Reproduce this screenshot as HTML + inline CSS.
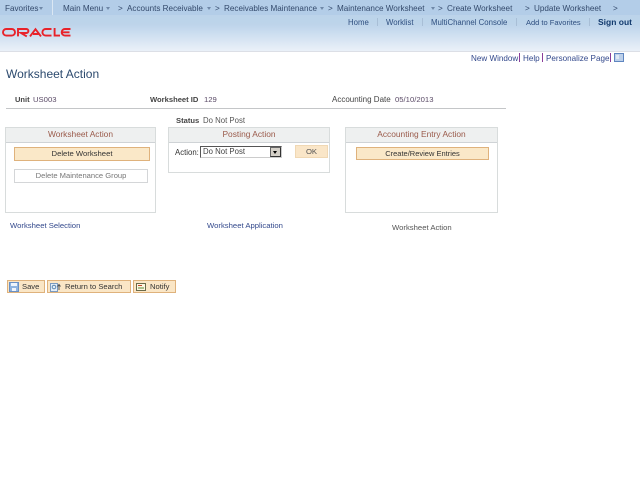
<!DOCTYPE html>
<html>
<head>
<meta charset="utf-8">
<style>
html,body{margin:0;padding:0;background:#fff;}
body{width:640px;height:480px;overflow:hidden;position:relative;font-family:"Liberation Sans",sans-serif;font-size:7.7px;color:#444;filter:blur(.3px);}
.a{position:absolute;white-space:nowrap;line-height:11px;}
.hdr{position:absolute;left:0;top:0;width:640px;height:51px;background:linear-gradient(#b9d2ea 0,#bdd4ea 24px,#c6daee 30px,#dbe7f4 42px,#e9f0f8 50px);border-bottom:1px solid #dcdfe6;}
.nav{position:absolute;left:0;top:0;width:640px;height:15px;background:#b3cde8;}
.n{color:#33496b;font-size:8.15px;top:3px;}
.t{color:#2f4f80;font-size:7.8px;top:17px;}
.sep{position:absolute;width:1px;background:#a8bed6;}
.l{color:#33498c;}
.box{position:absolute;border:1px solid #d8dcdc;box-sizing:border-box;background:#fff;}
.bh{position:absolute;left:0;top:0;right:0;height:14px;background:#eef0f0;border-bottom:1px solid #cfd3d6;text-align:center;color:#9a5a4a;font-size:8.4px;line-height:13px;}
.btn{position:absolute;box-sizing:border-box;background:#fae8c8;border:1px solid #dfb27c;text-align:center;color:#333;font-size:7.7px;line-height:11px;}
.dis{position:absolute;box-sizing:border-box;background:#fff;border:1px solid #d4d6d8;text-align:center;color:#777;font-size:7.6px;line-height:11px;}
.tb{position:absolute;box-sizing:border-box;top:280px;height:13px;background:#fae6c6;border:1px solid #dfb27c;color:#333;font-size:7.6px;line-height:11px;}
.arr{position:absolute;top:7px;width:0;height:0;border-left:2.5px solid transparent;border-right:2.5px solid transparent;border-top:3px solid #6f88a8;}
b{font-weight:bold;}
</style>
</head>
<body>
<div class="hdr"></div>
<div class="nav"></div>
<div class="sep" style="left:52px;top:0;height:15px;background:#dbe7f3;"></div>

<div class="a n" style="left:5px;">Favorites</div><div class="arr" style="left:39px;"></div>
<div class="a n" style="left:63px;">Main Menu</div><div class="arr" style="left:106px;"></div>
<div class="a n" style="left:118px;">&gt;</div>
<div class="a n" style="left:127px;">Accounts Receivable</div><div class="arr" style="left:207px;"></div>
<div class="a n" style="left:215px;">&gt;</div>
<div class="a n" style="left:224px;">Receivables Maintenance</div><div class="arr" style="left:320px;"></div>
<div class="a n" style="left:328px;">&gt;</div>
<div class="a n" style="left:337px;">Maintenance Worksheet</div><div class="arr" style="left:431px;"></div>
<div class="a n" style="left:438px;">&gt;</div>
<div class="a n" style="left:447px;">Create Worksheet</div>
<div class="a n" style="left:525px;">&gt;</div>
<div class="a n" style="left:534px;">Update Worksheet</div>
<div class="a n" style="left:613px;">&gt;</div>

<div class="a t" style="left:348px;">Home</div>
<div class="sep" style="left:377px;top:18px;height:8px;"></div>
<div class="a t" style="left:386px;">Worklist</div>
<div class="sep" style="left:422px;top:18px;height:8px;"></div>
<div class="a t" style="left:431px;">MultiChannel Console</div>
<div class="sep" style="left:516px;top:18px;height:8px;"></div>
<div class="a t" style="left:526px;font-size:7.5px;">Add to Favorites</div>
<div class="sep" style="left:589px;top:18px;height:8px;"></div>
<div class="a t" style="left:598px;color:#123a6e;font-size:8.5px;"><b>Sign out</b></div>

<svg style="position:absolute;left:1px;top:27px;" width="71" height="11" viewBox="0 0 71 11">
<g fill="none" stroke="#e8232a" stroke-width="1.9">
<rect x="2" y="2" width="12" height="6.6" rx="3.3"/>
<path d="M17 9.4V2H25.4a1.9 1.9 0 0 1 0 4H20L25.8 9.4"/>
<path d="M29 9.4L34.5 2.2L40 9.4M32 7H37.5"/>
<path d="M50.5 2H44.7a3.3 3.3 0 0 0 0 6.6H50.5"/>
<path d="M53.6 1V8.6H59"/>
<path d="M69.5 2H64a3.3 3.3 0 0 0 0 6.6H69.5M61.5 5.3H68.5"/>
</g>
</svg>

<div class="a l" style="left:471px;top:53px;font-size:8.1px;">New Window</div>
<div style="position:absolute;left:519px;top:53px;width:1px;height:9px;background:#8a3d9a;"></div>
<div class="a l" style="left:523px;top:53px;font-size:8.1px;">Help</div>
<div style="position:absolute;left:542px;top:53px;width:1px;height:9px;background:#8a3d9a;"></div>
<div class="a l" style="left:546px;top:53px;font-size:8.1px;">Personalize Page</div>
<div style="position:absolute;left:610px;top:53px;width:1px;height:9px;background:#8a3d9a;"></div>
<svg style="position:absolute;left:614px;top:53px;" width="10" height="9"><rect x=".5" y=".5" width="9" height="8" fill="#bcd0ea" stroke="#5f86c0"/><path d="M2 3H5M2 5H5" stroke="#fff"/></svg>

<div class="a" style="left:6px;top:67px;font-size:12px;line-height:14px;color:#2c4a6e;">Worksheet Action</div>

<div class="a" style="left:15px;top:94px;color:#444;"><b style="font-size:7.5px;">Unit</b></div>
<div class="a" style="left:33px;top:94px;color:#5a4a66;">US003</div>
<div class="a" style="left:150px;top:94px;color:#444;"><b style="font-size:7.6px;">Worksheet ID</b></div>
<div class="a" style="left:204px;top:94px;color:#5a4a66;">129</div>
<div class="a" style="left:332px;top:94px;color:#444;font-size:8px;">Accounting Date</div>
<div class="a" style="left:395px;top:94px;color:#5a4a66;">05/10/2013</div>
<div style="position:absolute;left:6px;top:108px;width:500px;height:1px;background:#c4c6c8;"></div>

<div class="a" style="left:176px;top:115px;"><b style="font-size:7.6px;">Status</b></div>
<div class="a" style="left:203px;top:115px;color:#555;font-size:7.8px;">Do Not Post</div>

<div class="box" style="left:5px;top:127px;width:151px;height:86px;">
  <div class="bh">Worksheet Action</div>
</div>
<div class="btn" style="left:14px;top:147px;width:136px;height:14px;">Delete Worksheet</div>
<div class="dis" style="left:14px;top:169px;width:134px;height:14px;">Delete Maintenance Group</div>

<div class="box" style="left:168px;top:127px;width:162px;height:46px;">
  <div class="bh">Posting Action</div>
</div>
<div class="a" style="left:175px;top:147px;color:#333;font-size:7.8px;">Action:</div>
<div style="position:absolute;box-sizing:border-box;left:200px;top:146px;width:82px;height:12px;border:1px solid #555;border-right-color:#ccc;border-bottom-color:#ccc;background:#fff;color:#444;padding-left:2px;line-height:10px;font-size:7.8px;">Do Not Post
  <div style="position:absolute;right:0;top:0;width:11px;height:10px;background:#d4d0c8;border:1px solid #666;border-right-color:#333;border-bottom-color:#333;box-sizing:border-box;"><div style="position:absolute;left:2px;top:3px;width:0;height:0;border-left:2.5px solid transparent;border-right:2.5px solid transparent;border-top:3px solid #000;"></div></div>
</div>
<div class="btn" style="left:295px;top:145px;width:33px;height:13px;background:#fae6c8;border-color:#f0d8b4;color:#555;">OK</div>

<div class="box" style="left:345px;top:127px;width:153px;height:86px;">
  <div class="bh">Accounting Entry Action</div>
</div>
<div class="btn" style="left:356px;top:147px;width:133px;height:13px;font-size:7.5px;">Create/Review Entries</div>

<div class="a l" style="left:10px;top:220px;">Worksheet Selection</div>
<div class="a l" style="left:207px;top:220px;">Worksheet Application</div>
<div class="a" style="left:392px;top:222px;color:#555;">Worksheet Action</div>

<div class="tb" style="left:7px;width:38px;">
  <svg style="position:absolute;left:1px;top:1px;" width="10" height="10"><rect x=".5" y=".5" width="9" height="9" fill="#8fb4e0" stroke="#6a90c4"/><rect x="2" y="1" width="6" height="3" fill="#eef4fb"/><rect x="3" y="6" width="4" height="3" fill="#f0f4fa"/></svg>
  <span style="position:absolute;left:14px;top:0;">Save</span>
</div>
<div class="tb" style="left:47px;width:84px;">
  <svg style="position:absolute;left:2px;top:1px;" width="12" height="10"><rect x=".5" y="1.5" width="7" height="8" fill="#e4eef8" stroke="#7a9ac0"/><circle cx="4" cy="5" r="1.8" fill="none" stroke="#5a86b0"/><path d="M9 8V3M7.5 4.5L9 2.5L10.5 4.5" fill="none" stroke="#555"/></svg>
  <span style="position:absolute;left:17px;top:0;">Return to Search</span>
</div>
<div class="tb" style="left:133px;width:43px;">
  <svg style="position:absolute;left:2px;top:1px;" width="11" height="10"><rect x=".5" y="1.5" width="9" height="7" fill="#fdf6e0" stroke="#6a6a4a"/><path d="M2 3.5H6" stroke="#c04a2a"/><path d="M2 6H8" stroke="#5a8a3a"/></svg>
  <span style="position:absolute;left:16px;top:0;">Notify</span>
</div>
</body>
</html>
